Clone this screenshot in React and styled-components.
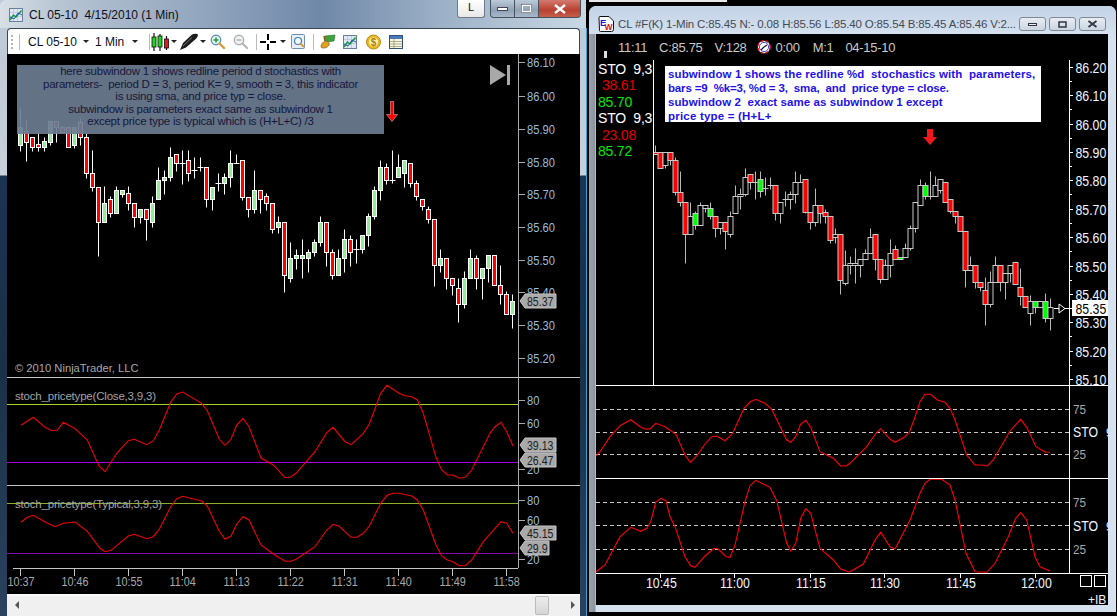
import React from 'react'
import styled, { createGlobalStyle } from 'styled-components'

const Reset = createGlobalStyle`
    html, body { margin: 0; padding: 0; background: #000; overflow: hidden; }
    * { box-sizing: border-box; }
`;

/* candle tables: [kind, bodyTop, bodyBottom, wickTop, wickBottom], y in thirds of a px from y=130 */
const leftCandles = [
    ['G',-9,44,-66,62],['R',4,35,-30,92],['R',22,52,22,62],['R',43,52,3,62],['G',34,52,22,62],['G',-27,35,-30,44],
    ['R',-27,-9,-27,36],['R',-9,5,-12,5],['R',-9,52,-9,52],['G',-9,44,-9,54],['R',-24,22,-36,44],['R',22,130,10,143],
    ['R',130,170,60,183],['R',170,277,170,378],['G',220,277,168,277],['R',208,250,198,261],['G',181,250,169,250],['G',181,191,181,200],
    ['R',190,220,168,240],['R',220,260,220,291],['G',238,260,238,278],['R',238,268,238,330],['G',220,277,198,291],['G',151,208,111,208],
    ['G',142,151,121,191],['G',82,142,52,152],['R',73,100,73,122],['D',100,100,60,162],['R',91,130,61,152],['D',121,121,82,143],
    ['D',112,112,82,123],['R',112,208,112,231],['G',170,208,170,240],['D',160,160,129,182],['G',142,160,129,191],['G',100,142,60,171],
    ['D',100,100,72,100],['R',91,200,91,210],['R',200,238,200,260],['G',181,238,121,250],['R',181,208,181,250],['R',199,220,190,240],
    ['R',220,298,220,308],['G',277,290,259,308],['R',277,436,277,485],['G',385,445,337,455],['G',376,385,358,416],['G',376,385,328,445],
    ['G',367,385,358,425],['G',337,367,328,377],['G',277,337,259,347],['R',277,367,277,407],['R',367,436,358,446],['G',385,436,358,436],
    ['G',328,385,297,425],['R',328,367,316,407],['D',358,358,328,398],['G',316,358,316,368],['G',259,316,250,347],['G',181,259,168,268],
    ['G',112,181,91,209],['R',112,151,100,161],['D',151,151,60,160],['G',112,142,72,142],['G',91,130,91,170],['R',100,160,100,170],
    ['R',160,199,150,209],['R',208,229,208,239],['R',238,268,229,278],['R',268,406,268,467],['G',385,406,358,426],['R',385,445,385,476],
    ['R',445,466,445,495],['R',475,523,445,575],['G',445,523,424,533],['G',385,445,358,445],['R',385,445,376,476],['G',415,445,415,506],
    ['G',376,415,376,456],['R',376,466,376,466],['R',466,493,406,523],['R',493,553,484,553],['G',513,553,493,593],
];

const rightCandles = [
    ['R',65,72,45,72],['R',65,115,65,115],['H',65,106,65,115],['R',65,91,65,106],['R',91,185,82,194],['R',185,217,124,227],
    ['R',217,311,217,398],['H',259,311,217,311],['G',250,286,243,296],['H',226,286,217,286],['H',226,235,226,247],['G',235,259,217,268],
    ['R',259,295,259,320],['H',277,295,277,311],['R',277,304,277,356],['H',259,311,243,320],['H',199,250,165,250],['H',193,199,175,236],
    ['H',142,193,115,199],['R',133,157,133,177],['D',157,157,124,208],['G',148,184,124,200],['D',175,175,142,194],['D',166,166,141,177],
    ['R',166,250,166,270],['H',217,250,217,278],['D',208,208,184,227],['H',193,208,184,236],['H',157,193,124,218],['D',157,157,133,157],
    ['R',148,245,148,250],['R',245,277,245,296],['H',226,277,175,287],['R',226,250,226,278],['R',245,259,236,278],['R',259,329,259,338],
    ['H',311,320,295,338],['R',311,449,311,491],['H',405,458,360,464],['H',398,405,378,431],['H',398,405,354,458],['H',388,405,388,440],
    ['H',370,388,356,388],['H',320,370,295,370],['R',311,388,311,420],['R',388,448,388,458],['H',406,448,388,448],['H',370,406,328,440],
    ['R',356,388,346,388],['G',380,388,380,388],['H',355,380,338,380],['H',295,355,285,360],['H',217,295,217,305],['H',166,226,147,226],
    ['G',166,199,156,208],['D',199,199,123,208],['H',166,199,138,199],['H',148,181,148,190],['R',157,217,157,217],['R',208,244,208,250],
    ['R',244,259,244,278],['R',259,304,259,304],['R',304,421,304,472],['H',406,421,378,421],['R',406,457,406,475],['R',457,472,457,484],
    ['R',481,523,440,585],['H',457,523,424,532],['H',406,457,378,457],['R',406,457,406,482],['H',430,457,430,508],['H',406,430,406,456],
    ['R',397,463,397,463],['R',472,499,415,526],['R',499,532,499,532],['H',514,550,496,585],['G',514,532,514,548],['H',514,532,514,532],
    ['G',514,565,490,575],['H',532,565,505,600],
];

/* indicator curves, thirds of a px. first list covers the left half of the chart, second the right */
const toPts = (list, ox, oy) => list.map(([x, y]) => `${(ox + x / 3).toFixed(1)},${(oy + y / 3).toFixed(1)}`).join(' ');

const leftStochA = toPts([[63,166],[100,142],[135,172],[155,182],[172,180],[190,157],[225,176],[262,210],[297,288],[315,305],[350,250],[385,212],[403,208],[440,224],[460,212],[478,180],[512,97],[530,72],[548,66],[605,100],[622,122],[658,208],[675,226],[693,208],[710,165],[729,145],[747,170],[783,264],[820,285],[855,323],[872,321]], 0, 370)
    + ' ' + toPts([[18,310],[75,245],[110,188],[129,172],[165,215],[183,224],[220,190],[238,162],[272,70],[291,46],[327,70],[345,77],[365,80],[382,90],[400,130],[438,262],[455,300],[472,315],[490,315],[508,325],[526,322],[545,300],[600,190],[615,170],[633,157],[650,185],[669,228]], 290, 370);
const leftStochB = toPts([[63,457],[82,442],[100,436],[135,456],[165,470],[190,460],[225,456],[262,484],[300,535],[315,545],[333,541],[385,498],[403,493],[440,506],[460,500],[478,478],[512,410],[530,386],[548,379],[605,393],[622,408],[658,484],[675,508],[693,498],[710,462],[729,440],[747,450],[783,525],[820,552],[855,574],[872,574]], 0, 370)
    + ' ' + toPts([[18,568],[75,530],[110,480],[129,463],[147,469],[183,502],[200,502],[220,490],[238,468],[272,400],[291,376],[310,370],[327,370],[365,378],[382,390],[400,420],[438,525],[455,558],[472,570],[490,576],[508,587],[526,587],[545,570],[580,515],[615,475],[633,455],[650,460],[669,490]], 290, 370);
const rightStochA = toPts([[18,257],[30,245],[60,200],[90,167],[122,149],[150,170],[165,177],[180,177],[197,160],[225,170],[258,193],[285,255],[301,277],[320,258],[345,222],[365,200],[380,198],[405,212],[428,190],[462,115],[480,96],[497,88],[525,100],[545,118],[590,210],[602,217],[617,200],[632,162],[647,151],[662,172],[690,245],[730,265],[752,288],[768,288]], 590, 370)
    + ' ' + toPts([[0,280],[48,232],[78,190],[92,176],[120,207],[135,217],[165,200],[178,187],[192,150],[210,95],[225,73],[242,73],[262,90],[285,97],[300,115],[315,150],[350,255],[375,285],[395,285],[412,288],[430,270],[480,183],[512,148],[530,172],[558,230],[585,246],[600,247]], 850, 370);
const rightStochB = toPts([[18,605],[45,585],[90,500],[122,472],[152,484],[170,475],[182,455],[197,397],[213,385],[228,392],[240,440],[255,470],[285,560],[302,587],[315,592],[345,558],[372,535],[385,537],[408,560],[420,562],[435,525],[465,395],[480,347],[497,331],[540,352],[560,392],[590,520],[602,543],[617,520],[632,445],[647,416],[662,430],[690,535],[730,570],[752,597],[775,605]], 590, 370)
    + ' ' + toPts([[0,605],[40,582],[75,510],[92,487],[120,530],[135,537],[180,450],[210,370],[225,340],[240,328],[275,328],[300,345],[315,390],[348,550],[375,605],[410,607],[435,580],[475,500],[497,445],[512,428],[530,450],[555,560],[570,590],[600,603]], 850, 370);

const leftPrices = [['86.10',62],['86.00',96],['85.90',129],['85.80',162],['85.70',194],['85.60',227],['85.50',260],['85.40',292],['85.30',325],['85.20',358]];
const rightPrices = [['86.20',67],['86.10',95],['86.00',124],['85.90',152],['85.80',180],['85.70',209],['85.60',237],['85.50',266],['85.40',294],['85.30',322],['85.20',351],['85.10',379]];
const leftTimes = ['10:37','10:46','10:55','11:04','11:13','11:22','11:31','11:40','11:49','11:58'];
const rightTimes = [['10:45',661],['11:00',735],['11:15',811],['11:30',885],['11:45',961],['12:00',1036]];

const Page = styled.div`
    display: flex;
    width: 1117px;
    height: 616px;
    background: #000;
    overflow: hidden;
    font-family: "Liberation Sans", Arial, sans-serif;
`;

const NinjaWindow = styled.section`
    width: 589px;
    height: 616px;
    padding: 0 9px 0 7px;
    display: flex;
    flex-direction: column;
    background:
        linear-gradient(90deg, transparent 586px, #2ea6d8 586px, #2ea6d8 587px, #000 587px),
        linear-gradient(180deg, #bcc9d6 0, #c8d0d9 175px, #1b3452 176px, #1a3048 360px, #2a425e 616px);
`;

const NinjaTitle = styled.header`
    height: 28px;
    margin: 0 -9px 0 -7px;
    padding: 0 8px 0 9px;
    display: flex;
    align-items: flex-start;
    background: linear-gradient(90deg, #d8dfe6 0, #b7c4d2 60px, #93a6be 200px, #7088a8 320px, #9cb0c6 440px, #c8d8e4 586px, #000 586px);
    border-radius: 6px 0 0 0;
`;

const TitleText = styled.span`
    margin: 8px 0 0 6px;
    font-size: 12px;
    line-height: 14px;
    color: #0a1020;
    white-space: pre;
    flex: 1;
`;

const IconSlot = styled.svg`
    flex: none;
    margin-top: ${props => props.$top || 0}px;
    margin-left: ${props => props.$left || 0}px;
`;

const LinkButton = styled.div`
    width: 28px;
    height: 18px;
    margin-right: 5px;
    border: 1px solid #6d7a88;
    border-top: none;
    border-radius: 0 0 3px 3px;
    background: linear-gradient(180deg, #fff, #e8e8e8);
    font-size: 11px;
    line-height: 15px;
    text-align: center;
    color: #0a1020;
`;

const CaptionButtons = styled.div`
    display: flex;
    height: 18px;
`;

const CaptionButton = styled.div`
    width: ${props => props.$w}px;
    display: flex;
    align-items: center;
    justify-content: center;
    border: 1px solid #48525e;
    border-top: none;
    border-left-width: ${props => props.$first ? 1 : 0}px;
    border-radius: ${props => props.$first ? '0 0 0 4px' : props.$close ? '0 0 4px 0' : '0'};
    background: ${props => props.$close
        ? 'linear-gradient(180deg, #d47a6e, #b8402f 60%, #c4604e)'
        : 'linear-gradient(180deg, #bccad9, #8fa2b6 60%, #a8b8c8)'};
`;

const Toolbar = styled.nav`
    height: 26px;
    flex: none;
    display: flex;
    align-items: center;
    padding-left: 3px;
    background: #fff;
    border: 1px solid #3a4654;
    border-bottom: none;
    border-radius: 4px 4px 0 0;
    font-size: 12px;
    color: #0a1020;
`;

const Grip = styled.span`
    width: 2px;
    height: 14px;
    background: repeating-linear-gradient(180deg, #b5b5b5 0 2px, transparent 2px 4px);
`;

const ToolSep = styled.span`
    width: 1px;
    height: 16px;
    margin-left: ${props => props.$gap}px;
    background: #b8bcc2;
`;

const ToolText = styled.span`
    margin-left: ${props => props.$gap}px;
    white-space: pre;
`;

const Caret = styled.span`
    width: 0;
    height: 0;
    margin-left: ${props => props.$gap}px;
    border-left: 3px solid transparent;
    border-right: 3px solid transparent;
    border-top: 3px solid #222;
`;

const ChartPane = styled.div`
    position: relative;
    flex: none;
    height: ${props => props.$h}px;
    background: #000;
    border-top: ${props => props.$line ? `1px solid ${props.$line}` : 'none'};
    overflow: hidden;
`;

const Plot = styled.svg`
    display: block;
    font-family: "Liberation Sans", Arial, sans-serif;
`;

const NoteOverlay = styled.div`
    position: absolute;
    left: 10px;
    top: 11px;
    width: 367px;
    height: 69px;
    background: rgba(108, 124, 145, 0.92);
    color: #14183a;
    font-size: 11.5px;
    line-height: 12.5px;
    letter-spacing: -0.25px;
    text-align: center;
`;

const NoteLine = styled.div`
    white-space: pre;
`;

const Copyright = styled.div`
    position: absolute;
    left: 8px;
    bottom: 3px;
    color: #a8a8a8;
    font-size: 11.2px;
    line-height: 12px;
`;

const ScrollTrack = styled.div`
    flex: 1;
    display: flex;
    align-items: center;
    padding: 0 5px 0 8px;
    background: linear-gradient(180deg, #fff 0, #f0f0f0 3px);
`;

const ScrollArrow = styled.span`
    width: 0;
    height: 0;
    border-top: 4px solid transparent;
    border-bottom: 4px solid transparent;
    ${props => props.$dir === 'left' ? 'border-right: 4px solid #555;' : 'border-left: 4px solid #555;'}
`;

const ScrollThumb = styled.span`
    width: 14px;
    height: 19px;
    margin: 0 22px 0 auto;
    border: 1px solid #bbb;
    border-radius: 2px;
    background: linear-gradient(180deg, #eee, #d4d4d4);
`;

const RightColumn = styled.div`
    width: 528px;
    display: flex;
    flex-direction: column;
`;

const TopSliver = styled.div`
    width: 138px;
    height: 2px;
    flex: none;
    background: #e8e8e8;
`;

const EWindow = styled.section`
    width: 527px;
    height: 606px;
    margin-top: 4px;
    padding: 0 8px 7px 7px;
    display: flex;
    flex-direction: column;
    border-radius: 7px 7px 0 0;
    background:
        linear-gradient(90deg, #9aa3ad 0, #8b939c 6px, transparent 7px),
        #d6e2f0;
`;

const ETitle = styled.header`
    height: 28px;
    flex: none;
    display: flex;
    align-items: center;
    margin: 0 -8px 0 -7px;
    padding: 8px 10px 0 9px;
    border-radius: 7px 7px 0 0;
    background: linear-gradient(180deg, #c3d3e6, #d4e0ee);
`;

const ETitleText = styled.span`
    flex: 1;
    min-width: 0;
    margin-left: 4px;
    font-size: 11.5px;
    color: #444a54;
    white-space: nowrap;
    letter-spacing: -0.15px;
`;

const ETitleButton = styled.div`
    width: 27px;
    height: 14px;
    margin-left: 3px;
    display: flex;
    align-items: center;
    justify-content: center;
    border: 1px solid #7f8a96;
    border-radius: 3px;
    background: linear-gradient(180deg, #e8edf3, #cbd5e0);
`;

const InfoRow = styled.div`
    height: 26px;
    flex: none;
    display: flex;
    align-items: center;
    background: #000;
    color: #c9c9c9;
    font-size: 13px;
    letter-spacing: -0.3px;
`;

const InfoItem = styled.span`
    margin-left: ${props => props.$gap}px;
    flex: none;
    white-space: nowrap;
`;

const TickMark = styled.span`
    width: 3px;
    height: 7px;
    margin: 15px 0 0 8px;
    background: #ddd;
    flex: none;
`;

const MainRow = styled.div`
    position: relative;
    flex: none;
    height: 325px;
    display: flex;
    background: #000;
`;

const StoColumn = styled.div`
    width: 58px;
    flex: none;
    padding: 1px 0 0 2px;
    border-right: 1px solid #fff;
    font-size: 14px;
    line-height: 16.4px;
    white-space: pre;
`;

const StoValue = styled.div`
    color: ${props => props.$color};
    padding-left: ${props => props.$indent || 0}px;
    letter-spacing: -0.2px;
`;

const BlueNote = styled.div`
    position: absolute;
    left: 69px;
    top: 6px;
    width: 376px;
    height: 56px;
    padding: 1px 0 0 3px;
    background: #fff;
    color: #2411e8;
    font-weight: bold;
    font-size: 11.5px;
    line-height: 14px;
    white-space: pre;
`;

const BlueLine = styled.div`
    letter-spacing: ${props => props.$ls}px;
`;

const PriceText = styled.text`
    fill: #9cbcdc;
    font-size: 12px;
`;

const WhiteText = styled.text`
    fill: #f2f6ff;
    font-size: ${props => props.$size || 14}px;
`;

const GrayText = styled.text`
    fill: #a8a8a8;
    font-size: ${props => props.$size || 12}px;
`;

const IndicatorName = styled.text`
    fill: #a4a4a4;
    font-size: 11.5px;
    letter-spacing: -0.2px;
`;

const FlagText = styled.text`
    fill: #1c1c1c;
    font-size: 12px;
`;

/* squeezes axis digits, the originals are taller than they are wide */
const Squeeze = ({ x, y, k, children }) => (
    <g transform={`translate(${x} ${y}) scale(${k} 1)`}>{children}</g>
);

const LeftCandle = ({ c, i }) => {
    const [kind, top, bot, wt, wb] = c;
    const x = 20.5 + 6 * i;
    const y = v => 130 + Math.round(v / 3) + 0.5;
    return (
        <g>
            <line x1={x} x2={x} y1={y(wt)} y2={y(wb)} stroke="#fff" />
            {kind === 'D'
                ? <line x1={x - 3} x2={x + 3} y1={y(top)} y2={y(top)} stroke="#fff" />
                : <rect x={x - 2} y={y(top)} width={4} height={y(bot) - y(top)} stroke="#fff" fill={kind === 'R' ? '#ff0000' : '#90ee90'} />}
        </g>
    );
}

const RightCandle = ({ c, i }) => {
    const [kind, top, bot, wt, wb] = c;
    const x = 655.5 + 5 * i;
    const y = v => 130 + Math.round(v / 3) + 0.5;
    const fill = kind === 'R' ? '#ff0000' : kind === 'G' ? '#00ff00' : '#000';
    return (
        <g>
            <line x1={x} x2={x} y1={y(wt)} y2={y(wb)} stroke="#b8b8b8" />
            {kind === 'D'
                ? <line x1={x - 3} x2={x + 3} y1={y(top)} y2={y(top)} stroke="#c8c8c8" />
                : <rect x={x - 2.5} y={y(top)} width={5} height={y(bot) - y(top)} stroke="#c8c8c8" fill={fill} />}
        </g>
    );
}

/* grey price flag that sits on the left axis */
const PriceFlag = ({ y, label, w = 36 }) => (
    <g>
        <polygon points={`520,${y} 525,${y - 7} ${520 + w},${y - 7} ${520 + w},${y + 7} 525,${y + 7}`} fill="#a9a9a9" stroke="#c4c4c4" />
        <Squeeze x={527} y={y + 4.5} k={0.88}><FlagText>{label}</FlagText></Squeeze>
    </g>
);

const LeftTick = ({ y }) => <line x1={518} x2={525} y1={y + 0.5} y2={y + 0.5} stroke="#a8a8a8" />;

const AxisNum = ({ y, children }) => (
    <Squeeze x={527} y={y + 4.5} k={0.93}><PriceText>{children}</PriceText></Squeeze>
);

const RightNum = ({ y, children }) => (
    <Squeeze x={1075.5} y={y + 5.5} k={0.88}><WhiteText>{children}</WhiteText></Squeeze>
);

const ScaleNote = ({ x, y, children }) => (
    <Squeeze x={x} y={y} k={0.9}><GrayText $size={13}>{children}</GrayText></Squeeze>
);

const StoLabel = ({ y }) => (
    <>
        <Squeeze x={1073} y={y} k={0.88}><WhiteText>STO</WhiteText></Squeeze>
        <WhiteText x={1106} y={y} $size={12}>9</WhiteText>
    </>
);

const ChartGlyph = ({ size = 14, top, left }) => (
    <IconSlot width={size} height={size} viewBox="0 0 14 14" $top={top} $left={left}>
        <rect x="0.5" y="0.5" width="13" height="13" fill="#dfe8f4" stroke="#6a7f9c" />
        <path d="M1 4.5h12M1 8.5h12M4.5 1v12M8.5 1v12" stroke="#b4c2d6" strokeWidth="0.7" />
        <path d="M1 12L4.5 7L7 9L12.5 2.5" stroke="#1b9c3a" strokeWidth="1.5" fill="none" />
        <path d="M1 9L5 11L9 5L13 7" stroke="#2a56c8" strokeWidth="1" fill="none" />
    </IconSlot>
);

const CandleGlyph = () => (
    <IconSlot width={19} height={18} viewBox="0 0 19 18" $left={1}>
        <path d="M3 0v18M9 1v17M15.5 3v14" stroke="#111" strokeWidth="1.2" />
        <rect x="1" y="4" width="4" height="10" fill="#1fd51f" stroke="#111" strokeWidth="0.8" />
        <rect x="7" y="3" width="4" height="11" fill="#1fd51f" stroke="#111" strokeWidth="0.8" />
        <rect x="13.5" y="6" width="4" height="9" fill="#e81818" stroke="#111" strokeWidth="0.8" />
    </IconSlot>
);

const PenGlyph = () => (
    <IconSlot width={20} height={18} viewBox="0 0 20 18" $left={2}>
        <path d="M1 17L4 10L13 1.5C15 0.5 18 0.5 19 1.5C19 4 17 6 15 7.5L7 14.5Z" fill="#1c1c1c" />
        <path d="M4 13L13 4.5" stroke="#8a8a8a" strokeWidth="0.8" />
    </IconSlot>
);

const GlassGlyph = ({ tint, mark, left, plus }) => (
    <IconSlot width={15} height={15} viewBox="0 0 15 15" $left={left}>
        <circle cx="6" cy="6" r="4.7" fill={tint} stroke={plus ? '#5e93b8' : '#aab0b6'} strokeWidth="1.4" />
        <path d="M9.5 9.5L14 14" stroke={plus ? '#d89a3a' : '#b8b8b8'} strokeWidth="2.4" strokeLinecap="round" />
        <path d={plus ? 'M3.5 6h5M6 3.5v5' : 'M3.5 6h5'} stroke={mark} strokeWidth="1.5" />
    </IconSlot>
);

const CrossGlyph = () => (
    <IconSlot width={16} height={16} viewBox="0 0 16 16" $left={3}>
        <path d="M0 8h6M10 8h6M8 0v6M8 10v6" stroke="#000" strokeWidth="2" />
    </IconSlot>
);

const PageGlyph = () => (
    <IconSlot width={15} height={15} viewBox="0 0 15 15" $left={5}>
        <rect x="0.5" y="0.5" width="13" height="14" rx="1" fill="#e6eef8" stroke="#6f8fb5" />
        <circle cx="7" cy="7" r="3.5" fill="#f7fbff" stroke="#3f7fb5" strokeWidth="1.2" />
        <path d="M9.5 9.5L13 13" stroke="#e09a30" strokeWidth="2" />
    </IconSlot>
);

const MoneyGlyph = () => (
    <IconSlot width={17} height={15} viewBox="0 0 17 15" $left={5}>
        <path d="M6 2L16 1L15 7L7 8Z" fill="#3da23f" stroke="#1f6e22" strokeWidth="0.6" />
        <path d="M2 13C2 10 4 8 6 7C9 7 11 9 10 11C9 14 3 15 2 13Z" fill="#e0a020" stroke="#8a5c10" strokeWidth="0.7" />
        <path d="M5 2L6 7" stroke="#8a5c10" strokeWidth="1.5" />
    </IconSlot>
);

const CoinGlyph = () => (
    <IconSlot width={15} height={16} viewBox="0 0 15 16" $left={9}>
        <circle cx="7.5" cy="8" r="7" fill="#e8b820" stroke="#b88a10" />
        <circle cx="7.5" cy="8" r="4.5" fill="#fff2b8" />
        <text x="7.5" y="11.5" textAnchor="middle" fontSize="10" fontWeight="bold" fill="#b07d08">$</text>
    </IconSlot>
);

const TableGlyph = () => (
    <IconSlot width={14} height={14} viewBox="0 0 14 14" $left={8}>
        <rect x="0.5" y="0.5" width="13" height="13" fill="#fbf6d8" stroke="#33507c" />
        <rect x="1" y="1" width="12" height="3" fill="#4a78b8" />
        <path d="M1 6.5h12M1 9h12M1 11.5h12M5 4v9" stroke="#8a9078" strokeWidth="0.7" />
    </IconSlot>
);

const NinjaWin = () => (
    <NinjaWindow>
        <NinjaTitle>
            <ChartGlyph size={14} top={8} />
            <TitleText>CL 05-10  4/15/2010 (1 Min)</TitleText>
            <LinkButton>L</LinkButton>
            <CaptionButtons>
                <CaptionButton $w={25} $first>
                    <svg width="11" height="4" viewBox="0 0 11 4"><rect x="0.5" y="0.5" width="10" height="3" fill="#fff" stroke="#445" /></svg>
                </CaptionButton>
                <CaptionButton $w={24}>
                    <svg width="11" height="9" viewBox="0 0 11 9"><rect x="1" y="1" width="9" height="7" fill="none" stroke="#fff" strokeWidth="2" /><rect x="0.5" y="0.5" width="10" height="8" fill="none" stroke="#445" strokeWidth="0.6" /></svg>
                </CaptionButton>
                <CaptionButton $w={42} $close>
                    <svg width="14" height="10" viewBox="0 0 14 10"><path d="M2 1L12 9M12 1L2 9" stroke="#fff" strokeWidth="2.4" /></svg>
                </CaptionButton>
            </CaptionButtons>
        </NinjaTitle>
        <Toolbar>
            <Grip />
            <ToolSep $gap={6} />
            <ToolText $gap={8}>CL 05-10</ToolText>
            <Caret $gap={6} />
            <ToolText $gap={6}>1 Min</ToolText>
            <Caret $gap={8} />
            <ToolSep $gap={11} />
            <CandleGlyph />
            <Caret $gap={1} />
            <PenGlyph />
            <Caret $gap={1} />
            <GlassGlyph tint="#eaf6ee" mark="#1f9c3a" left={4} plus />
            <GlassGlyph tint="#f2f2f2" mark="#b0b0b0" left={8} />
            <ToolSep $gap={8} />
            <CrossGlyph />
            <Caret $gap={4} />
            <PageGlyph />
            <ToolSep $gap={7} />
            <MoneyGlyph />
            <ChartGlyph size={14} left={7} />
            <CoinGlyph />
            <TableGlyph />
        </Toolbar>
        <ChartPane $h={323}>
            <Plot width={573} height={323} viewBox="7 54 573 323">
                {leftCandles.map((c, i) => <LeftCandle key={i} c={c} i={i} />)}
                <line x1={518.5} x2={518.5} y1={54} y2={377} stroke="#a8a8a8" />
                {leftPrices.map(([label, y]) => (
                    <g key={label}>
                        <LeftTick y={y} />
                        <AxisNum y={y}>{label}</AxisNum>
                    </g>
                ))}
                <PriceFlag y={301} label="85.37" />
                <polygon points="490,65 506,75 490,85" fill="#a8a8a8" />
                <rect x={507} y={65} width={3} height={20} fill="#a8a8a8" />
                <path d="M390.5 101.5h3v13h4l-5.5 7-5.500-7h4z" fill="#ff0000" stroke="#f0c8c8" strokeWidth="0.5" />
            </Plot>
            <NoteOverlay>
                <NoteLine>here subwindow 1 shows redline period d stochastics with</NoteLine>
                <NoteLine>parameters-  period D = 3, period K= 9, smooth = 3, this indicator</NoteLine>
                <NoteLine>is using sma, and price typ = close.</NoteLine>
                <NoteLine>subwindow is parameters exact same as subwindow 1</NoteLine>
                <NoteLine>except price type is typical which is (H+L+C) /3</NoteLine>
            </NoteOverlay>
            <Copyright>© 2010 NinjaTrader, LLC</Copyright>
        </ChartPane>
        <ChartPane $h={108} $line="#c4c4c4">
            <Plot width={573} height={107} viewBox="7 378 573 107">
                <line x1={7} x2={518} y1={404.5} y2={404.5} stroke="#a4d330" />
                <line x1={7} x2={518} y1={462.5} y2={462.5} stroke="#a800e0" />
                <polyline points={leftStochA} fill="none" stroke="#f00000" strokeWidth="1.1" />
                <line x1={518.5} x2={518.5} y1={378} y2={485} stroke="#a8a8a8" />
                <IndicatorName x={15} y={399.5}>stoch_pricetype(Close,3,9,3)</IndicatorName>
                <LeftTick y={400} /><AxisNum y={400}>80</AxisNum>
                <LeftTick y={423} /><AxisNum y={423}>60</AxisNum>
                <LeftTick y={469} /><AxisNum y={469}>20</AxisNum>
                <PriceFlag y={445} label="39.13" />
                <PriceFlag y={460} label="26.47" />
            </Plot>
        </ChartPane>
        <ChartPane $h={83} $line="#c4c4c4">
            <Plot width={573} height={82} viewBox="7 486 573 82">
                <line x1={7} x2={518} y1={503.5} y2={503.5} stroke="#8cb028" />
                <line x1={7} x2={518} y1={553.5} y2={553.5} stroke="#8808b0" />
                <polyline points={leftStochB} fill="none" stroke="#f00000" strokeWidth="1.1" />
                <line x1={518.5} x2={518.5} y1={486} y2={568} stroke="#a8a8a8" />
                <IndicatorName x={15} y={507.5}>stoch_pricetype(Typical,3,9,3)</IndicatorName>
                <LeftTick y={500} /><AxisNum y={500}>80</AxisNum>
                <LeftTick y={520} /><AxisNum y={520}>60</AxisNum>
                <LeftTick y={559} /><AxisNum y={559}>20</AxisNum>
                <PriceFlag y={533} label="45.15" />
                <PriceFlag y={548} label="29.9" w={29} />
            </Plot>
        </ChartPane>
        <ChartPane $h={26}>
            <Plot width={573} height={26} viewBox="7 568 573 26">
                <line x1={13} x2={518} y1={568.5} y2={568.5} stroke="#c4c4c4" />
                {leftTimes.map((t, i) => (
                    <g key={t}>
                        <line x1={20.5 + 54 * i} x2={20.5 + 54 * i} y1={569} y2={576} stroke="#c4c4c4" />
                        <Squeeze x={7.5 + 54 * i} y={585.5} k={0.9}><GrayText $size={12}>{t}</GrayText></Squeeze>
                    </g>
                ))}
            </Plot>
        </ChartPane>
        <ScrollTrack>
            <ScrollArrow $dir="left" />
            <ScrollThumb />
            <ScrollArrow $dir="right" />
        </ScrollTrack>
    </NinjaWindow>
);

const ClockGlyph = () => (
    <IconSlot width={14} height={14} viewBox="0 0 14 14" $left={10}>
        <circle cx="7" cy="7" r="6.2" fill="#fff" stroke="#e01010" strokeWidth="1.4" strokeDasharray="3 2" />
        <circle cx="7" cy="7" r="4.6" fill="#fff" stroke="#1020c0" strokeWidth="0.8" />
        <path d="M7 7L10 5M7 7L4 10" stroke="#101040" strokeWidth="1.2" />
    </IconSlot>
);

const EwLogo = () => (
    <IconSlot width={16} height={16} viewBox="0 0 16 16">
        <path d="M1 1.5a1 1 0 0 1 1-1h9l4.500 4.500v8.500a2 2 0 0 1-2 2h-11a1 1 0 0 1-1-1z" fill="#fff" stroke="#101018" />
        <text x="2" y="9.5" fontSize="9.5" fontWeight="bold" fill="#1020d0" fontFamily="Liberation Sans">E</text>
        <text x="6.5" y="13.5" fontSize="8.5" fontWeight="bold" fill="#e01010" fontFamily="Liberation Sans">W</text>
    </IconSlot>
);

const EWin = () => (
    <EWindow>
        <ETitle>
            <EwLogo />
            <ETitleText>CL #F(K) 1-Min C:85.45 N:- 0.08 H:85.56 L:85.40 O:85.54 B:85.45 A:85.46 V:2...</ETitleText>
            <ETitleButton>
                <svg width="9" height="3" viewBox="0 0 9 3"><rect x="0.5" y="0.5" width="8" height="2" fill="#eee" stroke="#334" /></svg>
            </ETitleButton>
            <ETitleButton>
                <svg width="9" height="7" viewBox="0 0 9 7"><rect x="1" y="1" width="7" height="5" fill="none" stroke="#334" strokeWidth="1.5" /></svg>
            </ETitleButton>
            <ETitleButton>
                <svg width="11" height="8" viewBox="0 0 11 8"><path d="M1.5 1L9.5 7M9.5 1L1.500 7" stroke="#334" strokeWidth="1.8" /></svg>
            </ETitleButton>
        </ETitle>
        <InfoRow>
            <TickMark />
            <InfoItem $gap={11}>11:11</InfoItem>
            <InfoItem $gap={12}>C:85.75</InfoItem>
            <InfoItem $gap={12}>V:128</InfoItem>
            <ClockGlyph />
            <InfoItem $gap={5}>0:00</InfoItem>
            <InfoItem $gap={13}>M:1</InfoItem>
            <InfoItem $gap={12}>04-15-10</InfoItem>
        </InfoRow>
        <MainRow>
            <StoColumn>
                <StoValue $color="#fff">STO  9,3</StoValue>
                <StoValue $color="#e00000" $indent={4}>38.61</StoValue>
                <StoValue $color="#00e800">85.70</StoValue>
                <StoValue $color="#fff">STO  9,3</StoValue>
                <StoValue $color="#e00000" $indent={4}>23.08</StoValue>
                <StoValue $color="#00e800">85.72</StoValue>
            </StoColumn>
            <Plot width={454} height={325} viewBox="654 60 454 325">
                {rightCandles.map((c, i) => <RightCandle key={i} c={c} i={i} />)}
                <path d="M927 129h6v8h4l-7 8-7-8h4z" fill="#f01818" />
                <line x1={1069.5} x2={1069.5} y1={60} y2={385} stroke="#fff" />
                {rightPrices.map(([label, y]) => (
                    <g key={label}>
                        <line x1={1070} x2={1073} y1={y + 0.5} y2={y + 0.5} stroke="#fff" />
                        <line x1={1070} x2={1072} y1={y + 14.5} y2={y + 14.5} stroke="#fff" />
                        <RightNum y={y}>{label}</RightNum>
                    </g>
                ))}
                <line x1={1054} x2={1069} y1={308.5} y2={308.5} stroke="#fff" />
                <polygon points="1059,304 1065,308.5 1059,313" fill="#000" stroke="#fff" />
                <rect x={1072} y={300} width={36} height={16} fill="#fff" />
                <Squeeze x={1075.5} y={313.5} k={0.88}><text fontSize="14" fill="#000">85.35</text></Squeeze>
            </Plot>
            <BlueNote>
                <BlueLine $ls={0.11}>subwindow 1 shows the redline %d  stochastics with  parameters,</BlueLine>
                <BlueLine $ls={-0.15}>bars =9  %k=3, %d = 3,  sma,  and  price type = close.</BlueLine>
                <BlueLine $ls={0.07}>subwindow 2  exact same as subwindow 1 except</BlueLine>
                <BlueLine $ls={0.2}>price type = (H+L+</BlueLine>
            </BlueNote>
        </MainRow>
        <ChartPane $h={93} $line="#fff">
            <Plot width={512} height={92} viewBox="596 386 512 92">
                {[409.5, 432.5, 454.5].map(y => <line key={y} x1={596} x2={1069} y1={y} y2={y} stroke="#c8c8c8" strokeDasharray="4 3" />)}
                <polyline points={rightStochA} fill="none" stroke="#ff0000" strokeWidth="1.1" />
                <line x1={1069.5} x2={1069.5} y1={386} y2={478} stroke="#fff" />
                <ScaleNote x={1073} y={414}>75</ScaleNote>
                <StoLabel y={437} />
                <ScaleNote x={1073} y={459}>25</ScaleNote>
            </Plot>
        </ChartPane>
        <ChartPane $h={95} $line="#fff">
            <Plot width={512} height={94} viewBox="596 479 512 94">
                {[502.5, 525.5, 549.5].map(y => <line key={y} x1={596} x2={1069} y1={y} y2={y} stroke="#c8c8c8" strokeDasharray="4 3" />)}
                <polyline points={rightStochB} fill="none" stroke="#ff0000" strokeWidth="1.1" />
                <line x1={1069.5} x2={1069.5} y1={479} y2={573} stroke="#fff" />
                <ScaleNote x={1073} y={507}>75</ScaleNote>
                <StoLabel y={531} />
                <ScaleNote x={1073} y={554}>25</ScaleNote>
            </Plot>
        </ChartPane>
        <ChartPane $h={32} $line="#fff">
            <Plot width={512} height={31} viewBox="596 574 512 31">
                {rightTimes.map(([t, x]) => (
                    <g key={t}>
                        <line x1={x - 0.5} x2={x - 0.5} y1={574} y2={578} stroke="#fff" />
                        <Squeeze x={x - 15} y={588} k={0.88}><WhiteText>{t}</WhiteText></Squeeze>
                    </g>
                ))}
                <rect x={1080.5} y={575.5} width={11} height={11} fill="none" stroke="#fff" />
                <rect x={1094.5} y={575.5} width={11} height={11} fill="none" stroke="#fff" />
                <WhiteText $size={12} x={1088} y={603.5}>+IB</WhiteText>
            </Plot>
        </ChartPane>
    </EWindow>
);

const App = () => (
    <Page>
        <Reset />
        <NinjaWin />
        <RightColumn>
            <TopSliver />
            <EWin />
        </RightColumn>
    </Page>
);

export default App;
